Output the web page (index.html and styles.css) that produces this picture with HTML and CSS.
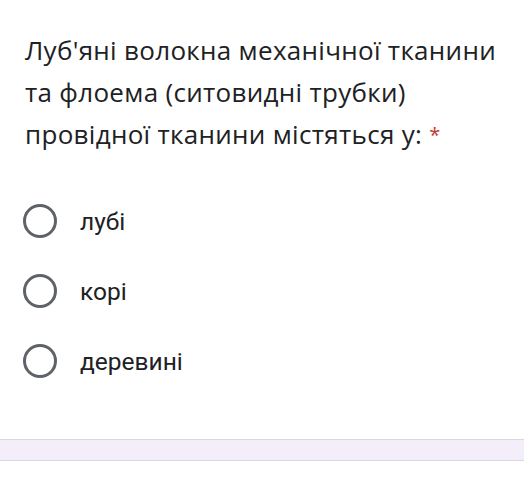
FILE: index.html
```html
<!DOCTYPE html>
<html lang="uk">
<head>
<meta charset="utf-8">
<link rel="stylesheet" href="styles.css">
</head>
<body>
<div class="card">
  <div class="question">Луб'яні волокна механічної тканини<br>та флоема (ситовидні трубки)<br>провідної тканини містяться у: <span class="req">*</span></div>
  <div class="options">
    <div class="option"><span class="radio"></span><span class="label">лубі</span></div>
    <div class="option"><span class="radio"></span><span class="label">корі</span></div>
    <div class="option"><span class="radio"></span><span class="label">деревині</span></div>
  </div>
</div>
<div class="band"></div>
</body>
</html>
```
FILE: styles.css
```css
html, body {
  margin: 0;
  padding: 0;
  background: #ffffff;
}
.card {
  height: 439px;
  box-sizing: border-box;
  padding: 29px 0 0 25px;
}
.question {
  font-family: "Open Sans", sans-serif;
  font-size: 26px;
  line-height: 42px;
  letter-spacing: 0.3px;
  color: #202124;
}
.req {
  color: #c5362b;
  font-size: 20px;
  vertical-align: 2px;
}
.options {
  display: flex;
  flex-direction: column;
  gap: 36px;
  margin-top: 48px;
}
.option {
  display: flex;
  align-items: center;
  height: 34px;
}
.radio {
  width: 28px;
  height: 28px;
  border: 3px solid #5f6368;
  border-radius: 50%;
  margin-left: -2px;
  flex: none;
}
.label {
  margin-left: 23px;
  font-family: "Roboto", sans-serif;
  font-size: 24.5px;
  color: #202124;
}
.band {
  height: 20px;
  background: #f4edfa;
  border-top: 1px solid #dcd6df;
  border-bottom: 1px solid #dcd6df;
}
```
